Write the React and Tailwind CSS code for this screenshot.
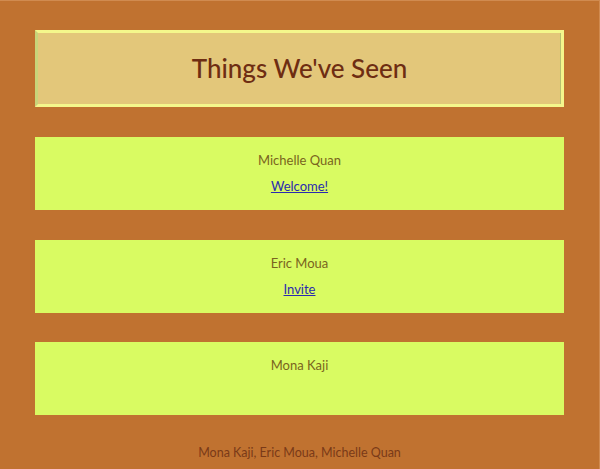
const people = [
  { name: 'Michelle Quan', link: 'Welcome!' },
  { name: 'Eric Moua', link: 'Invite' },
  { name: 'Mona Kaji' },
];

function Card({ person }) {
  return (
    <div className="h-[73px] bg-[#d9fb62] pt-[14px] text-center">
      <p className="text-[13px] leading-[18px] text-[#7a6420]">{person.name}</p>
      {person.link && (
        <p className="mt-[8px] text-[13px] leading-[18px]">
          <a href="#" className="text-[#2a2ab0] underline">{person.link}</a>
        </p>
      )}
    </div>
  );
}

export default function App() {
  return (
    <div className="h-[469px] w-[600px] overflow-hidden border-t border-r border-[#d08b50] bg-[#c07230] px-[35px] pt-[29px] font-['Lato','Open_Sans',sans-serif]">
      <header className="flex h-[77px] items-center justify-center border-[3px] border-[#f4f78c] border-l-[#c8d47a] bg-[#e3c77a] shadow-[inset_-1px_0_0_#b8c070]">
        <h1 className="text-[26px] font-medium text-[#6e2d12]">Things We've Seen</h1>
      </header>
      <div className="mt-[30px] flex flex-col gap-[29.5px]">
        {people.map((p) => (
          <Card key={p.name} person={p} />
        ))}
      </div>
      <footer className="mt-[29px] text-center text-[12.5px] leading-[18px] text-[#7a3a18]">
        Mona Kaji, Eric Moua, Michelle Quan
      </footer>
    </div>
  );
}
